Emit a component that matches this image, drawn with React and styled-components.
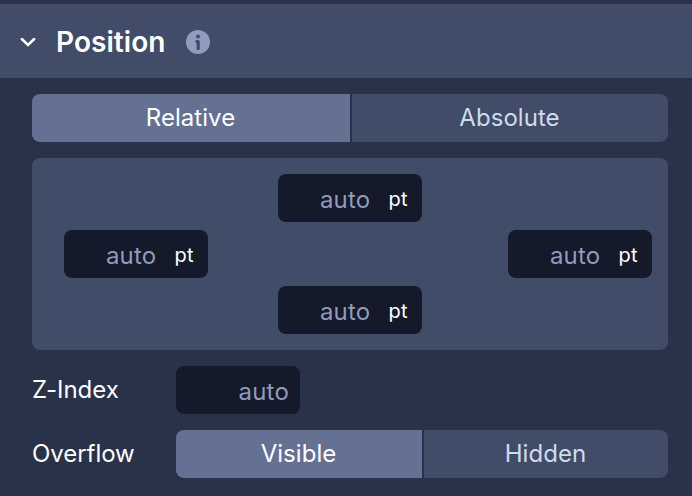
import React, { useState } from 'react'
import styled, { createGlobalStyle } from "styled-components"

const GlobalStyle=createGlobalStyle`
    *{
        box-sizing:border-box;
    }
    body{
        margin:0;
        background-color:#283248;
        font-family:Inter, sans-serif;
        color:#fff;
    }
`;
const Panel=styled.div`
    width:692px;
    height:496px;
    overflow:hidden;
    padding-top:4px;
    background-color:#283248;
`;
const Header=styled.div`
    height:74px;
    padding:2px 0 0 20px;
    display:flex;
    align-items:center;
    background-color:#414c69;
`;
const Title=styled.h2`
    margin:0 21px 0 20px;
    font-size:28px;
    line-height:34px;
    font-weight:600;
    letter-spacing:0.05px;
`;
const Body=styled.div`
    padding:16px 24px 0 32px;
    display:flex;
    flex-direction:column;
    gap:16px;
`;
const Segmented=styled.div`
    flex:1;
    height:48px;
    display:grid;
    grid-template-columns:${props => props.$columns};
    gap:2px;
    border-radius:8px;
    overflow:hidden;
`;
const Segment=styled.button`
    border:0;
    padding:0 1px 2px 0;
    font-family:inherit;
    font-size:24px;
    letter-spacing:0.05px;
    color:${props => props.$active ? "#fff" : "#cfdbea"};
    background-color:${props => props.$active ? "#657192" : "#414c69"};
    cursor:pointer;
`;
const Offsets=styled.div`
    height:192px;
    padding:16px 16px 16px 32px;
    display:grid;
    grid-template-columns:214px 230px 144px;
    grid-template-rows:repeat(3, 48px);
    grid-template-areas:". top ." "left . right" ". bottom .";
    row-gap:8px;
    border-radius:8px;
    background-color:#414c69;
`;
const Field=styled.label`
    grid-area:${props => props.$area};
    width:${props => props.$width || "144px"};
    height:48px;
    padding:3px ${props => props.$area ? "14px" : "11px"} 0 0;
    display:flex;
    align-items:center;
    border-radius:8px;
    background-color:#141a29;
`;
const Input=styled.input`
    flex:1;
    min-width:0;
    padding:0;
    border:0;
    outline:0;
    background:none;
    font-family:inherit;
    font-size:24px;
    letter-spacing:0.2px;
    text-align:right;
    color:#fff;
    &::placeholder{
        color:#8f9bbd;
        opacity:1;
    }
`;
const Unit=styled.span`
    margin-left:18px;
    padding-bottom:2px;
    font-size:20px;
    letter-spacing:0.4px;
`;
const Row=styled.div`
    height:48px;
    display:flex;
    align-items:center;
`;
const Label=styled.span`
    width:144px;
    padding-bottom:2px;
    font-size:24px;
    letter-spacing:-0.05px;
`;

const ChevronIcon = () => (
    <svg width="16" height="10" viewBox="0 0 16 10" fill="none">
        <path d="M1.8 2L8 8L14.2 2" stroke="#fff" strokeWidth="2.5" strokeLinecap="round" strokeLinejoin="miter"/>
    </svg>
)

const InfoIcon = () => (
    <svg width="24" height="24" viewBox="0 0 24 24">
        <circle cx="12" cy="12" r="12" fill="#909cbe"/>
        <circle cx="12" cy="6.5" r="2" fill="#414c69"/>
        <path d="M10.8 11.5H12.2V18.5" fill="none" stroke="#414c69" strokeWidth="3.2" strokeLinecap="round" strokeLinejoin="round"/>
    </svg>
)

const Toggle = ({ options, columns }) => {
    const [selected,setSelected]=useState(options[0]);
    return (
        <Segmented $columns={columns}>
            {options.map((option)=>(
                <Segment key={option} $active={option===selected} onClick={()=>setSelected(option)}>{option}</Segment>
            ))}
        </Segmented>
    )
}

const App = () => {
  return (
    <Panel>
      <GlobalStyle/>
      <Header>
        <ChevronIcon/>
        <Title>Position</Title>
        <InfoIcon/>
      </Header>
      <Body>
        <Row>
            <Toggle options={["Relative","Absolute"]} columns="318px 1fr"/>
        </Row>
        <Offsets>
            {["top","left","right","bottom"].map((side)=>(
                <Field key={side} $area={side}>
                    <Input placeholder="auto" aria-label={side}/>
                    <Unit>pt</Unit>
                </Field>
            ))}
        </Offsets>
        <Row>
            <Label>Z-Index</Label>
            <Field $width="124px">
                <Input placeholder="auto" aria-label="Z-Index"/>
            </Field>
        </Row>
        <Row>
            <Label>Overflow</Label>
            <Toggle options={["Visible","Hidden"]} columns="246px 1fr"/>
        </Row>
      </Body>
    </Panel>
  )
}

export default App
